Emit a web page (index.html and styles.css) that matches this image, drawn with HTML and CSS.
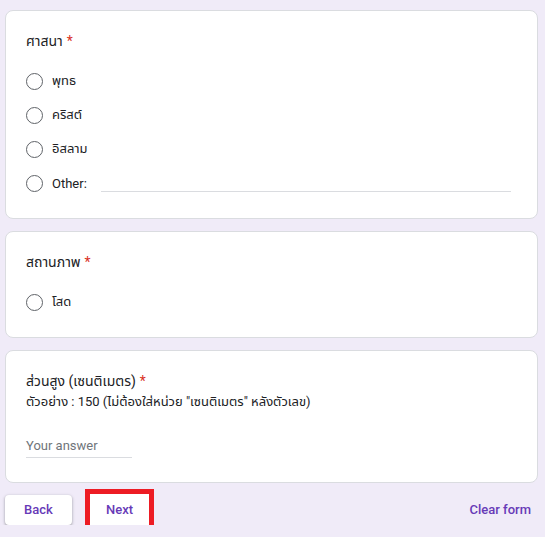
FILE: index.html
```html
<!doctype html>
<html>
  <head>
    <meta charset="utf-8">
    <link rel="stylesheet" href="styles.css">
  </head>
  <body>
    <main class="form">
      <section class="card">
        <div class="q-title">ศาสนา <span class="req">*</span></div>
        <div class="options">
          <label class="option"><span class="radio"></span><span>พุทธ</span></label>
          <label class="option"><span class="radio"></span><span>คริสต์</span></label>
          <label class="option"><span class="radio"></span><span>อิสลาม</span></label>
          <label class="option other">
            <span class="radio"></span><span>Other:</span>
            <span class="other-line"></span>
          </label>
        </div>
      </section>

      <section class="card">
        <div class="q-title">สถานภาพ <span class="req">*</span></div>
        <div class="options">
          <label class="option"><span class="radio"></span><span>โสด</span></label>
        </div>
      </section>

      <section class="card">
        <div class="q-title">ส่วนสูง (เซนติเมตร) <span class="req">*</span></div>
        <div class="q-desc">ตัวอย่าง : 150 (ไม่ต้องใส่หน่วย "เซนติเมตร" หลังตัวเลข)</div>
        <div class="answer">Your answer</div>
      </section>

      <div class="nav">
        <button class="btn">Back</button>
        <button class="btn btn-next">Next</button>
        <span class="clear">Clear form</span>
      </div>
    </main>
  </body>
</html>
```

FILE: styles.css
```css
*,
*::before,
*::after {
  box-sizing: border-box;
  margin: 0;
  padding: 0;
}

body {
  font-family: Roboto, "Noto Sans Thai", "Noto Sans", sans-serif;
  color: #202124;
  background-color: #f0ebf8;
  padding: 10px 7px 0 5px;
}

.form {
  display: flex;
  flex-direction: column;
  gap: 12px;
}

.card {
  background-color: #fff;
  border: 1px solid #dadce0;
  border-radius: 8px;
  padding: 20px 20px 18px;
}

.q-title {
  display: flex;
  align-items: center;
  gap: 4px;
  height: 20px;
  font-size: 14px;
}

.req {
  color: #d93025;
}

.q-desc {
  display: flex;
  align-items: center;
  height: 21px;
  font-size: 13px;
}

.options {
  margin-top: 13px;
}

.option {
  display: flex;
  align-items: center;
  height: 34px;
  font-size: 13px;
}

.radio {
  width: 17px;
  height: 17px;
  border: 1.5px solid #5f6368;
  border-radius: 50%;
  margin-right: 9px;
  flex: none;
}

.other-line {
  flex: 1;
  height: 18px;
  margin: 0 6px 0 14px;
  border-bottom: 1px solid #dadce0;
}

.answer {
  display: flex;
  align-items: center;
  margin-top: 24px;
  width: 106px;
  height: 22px;
  font-size: 13px;
  padding-bottom: 3px;
  color: #70757a;
  border-bottom: 1px solid #dadce0;
  margin-bottom: 6px;
}

.nav {
  display: flex;
  align-items: center;
  margin-top: -1px;
}

.btn {
  font-family: Roboto, sans-serif;
  font-size: 13px;
  font-weight: 500;
  color: #673ab7;
  background-color: #fff;
  border: none;
  border-radius: 4px;
  height: 30px;
  width: 67px;
  box-shadow: 0 1px 2px rgba(60, 64, 67, 0.3), 0 1px 3px 1px rgba(60, 64, 67, 0.15);
}

.btn-next {
  width: 59px;
  height: 31px;
  margin-left: 18px;
  border-radius: 0;
  outline: 5px solid #ed1c24;
}

.clear {
  margin-left: auto;
  margin-right: 7px;
  font-size: 13px;
  font-weight: 500;
  color: #673ab7;
}
```
